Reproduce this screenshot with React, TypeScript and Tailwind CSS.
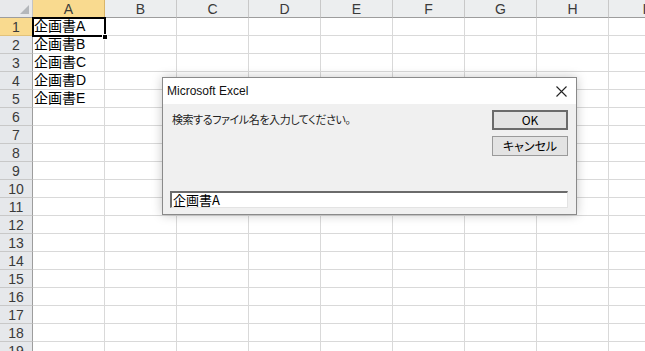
import React from "react";

const COLS = ["A", "B", "C", "D", "E", "F", "G", "H", "I"];
const ROWS = Array.from({ length: 19 }, (_, i) => i + 1);
const DATA: Record<number, string> = {
  1: "企画書A",
  2: "企画書B",
  3: "企画書C",
  4: "企画書D",
  5: "企画書E",
};

const cellFont = "[font-family:'Liberation_Sans','Noto_Sans_CJK_JP',sans-serif]";

function HeaderRow() {
  return (
    <div className="flex h-[18px]">
      <div className="relative w-[33px] h-[18px] shrink-0 bg-[#e8e9eb] border-r border-b border-r-[#c4c4c4] border-b-[#9d9d9d]">
        <svg className="absolute right-[3px] bottom-[3px]" width="9" height="9" viewBox="0 0 9 9">
          <polygon points="9,0 9,9 0,9" fill="#b4b7bb" />
        </svg>
      </div>
      {COLS.map((c) => (
        <div
          key={c}
          className={
            "w-[72px] h-[18px] shrink-0 flex items-center justify-center border-r border-b text-[14px] leading-[18px] text-[#3a3a3a] " +
            cellFont +
            (c === "A"
              ? " bg-[#f9da8f] border-r-[#d9b56a] border-b-[#e2b45b]"
              : " bg-[#eceeef] border-r-[#c8c8c8] border-b-[#9d9d9d]")
          }
        >
          {c}
        </div>
      ))}
    </div>
  );
}

function Row({ n }: { n: number }) {
  return (
    <div className="flex h-[18px]">
      <div
        className={
          "w-[33px] h-[18px] shrink-0 flex items-center justify-center border-r border-b text-[14px] leading-[18px] text-[#3a3a3a] " +
          cellFont +
          (n === 1
            ? " bg-[#f9da8f] border-r-[#d9a84e] border-b-[#e2c27a]"
            : " bg-[#e6e8eb] border-r-[#9d9d9d] border-b-[#c8c8c8]")
        }
      >
        {n}
      </div>
      {COLS.map((c) => (
        <div
          key={c}
          className={
            "relative w-[72px] h-[18px] shrink-0 border-r border-b border-[#d9d9d9] text-[14px] leading-[17px] text-black pl-[1px] whitespace-nowrap " +
            cellFont
          }
        >
          {c === "A" ? DATA[n] ?? "" : ""}
        </div>
      ))}
    </div>
  );
}

function Dialog() {
  return (
    <div className="absolute left-[162px] top-[77px] w-[415px] h-[138px] border border-[#8a8a8a] bg-[#f0f0f0] shadow-[0_0_10px_rgba(0,0,0,0.22)] flex flex-col">
      <div className="h-[26px] bg-white flex items-center justify-between pl-[4px] pr-[9px] shrink-0">
        <span className="text-[12px] text-[#111] [font-family:'Liberation_Sans',sans-serif]">Microsoft Excel</span>
        <svg width="11" height="11" viewBox="0 0 11 11">
          <path d="M0.5 0.5 L10.5 10.5 M10.5 0.5 L0.5 10.5" stroke="#222" strokeWidth="1.1" />
        </svg>
      </div>
      <div className="flex-1 flex flex-col px-[7px]">
        <div className="flex justify-between mt-[6px]">
          <div className="pl-[2px] pt-[1px] text-[11px] tracking-[-0.4px] text-[#222] [font-family:'Noto_Sans_CJK_JP',sans-serif] [font-feature-settings:'palt']">
            検索するファイル名を入力してください。
          </div>
          <div className="flex flex-col gap-[6px] mr-[1px]">
            <button className="w-[76px] h-[20px] border-2 border-[#6b6b6b] bg-[#e3e3e3] text-[12px] leading-[16px] text-black [font-family:'Noto_Sans_CJK_JP',sans-serif]">
              OK
            </button>
            <button className="w-[76px] h-[20px] border border-[#9a9a9a] bg-[#e3e3e3] text-[12px] leading-[18px] text-black [font-family:'Noto_Sans_CJK_JP',sans-serif] [font-feature-settings:'palt']">
              キャンセル
            </button>
          </div>
        </div>
        <div className="mt-auto mb-[6px] mr-[1px] h-[17px] bg-white border-t-2 border-l-2 border-b border-r border-t-[#6b6b6b] border-l-[#6b6b6b] border-b-[#e3e3e3] border-r-[#e3e3e3] flex items-center pl-[1px] text-[13px] text-black [font-family:'Noto_Sans_CJK_JP',sans-serif]">
          企画書A
        </div>
      </div>
    </div>
  );
}

export default function App() {
  return (
    <div className="relative w-[645px] h-[351px] overflow-hidden bg-white">
      <HeaderRow />
      {ROWS.map((n) => (
        <Row key={n} n={n} />
      ))}
      <div className="absolute left-[32px] top-[17px] w-[74px] h-[20px] border-2 border-black pointer-events-none" />
      <div className="absolute left-[102px] top-[34px] w-[6px] h-[6px] bg-black border border-white" />
      <Dialog />
    </div>
  );
}
